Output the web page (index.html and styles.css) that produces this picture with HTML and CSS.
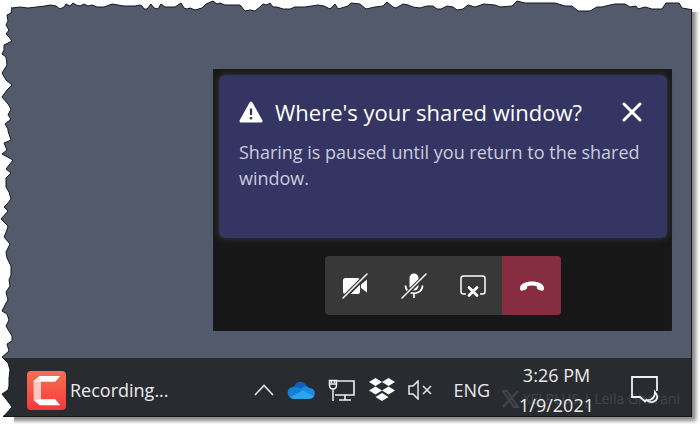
FILE: index.html
```html
<!DOCTYPE html>
<html lang="en">
<head>
<meta charset="utf-8">
<title>Desktop sharing notification</title>
<link rel="stylesheet" href="styles.css">
</head>
<body>
<main class="desktop">
  <div class="workspace">
    <section class="call" aria-label="Call monitor">
      <div class="banner">
        <header class="banner-head">
          <svg class="warning" viewBox="0 0 24 24" aria-hidden="true">
            <path d="M12 3 L22 21 H2 Z" fill="#fff" stroke="#fff" stroke-width="3" stroke-linejoin="round"/>
            <path d="M12 8.500V15" stroke="#33345f" stroke-width="2.200"/>
            <circle cx="12" cy="18.300" r="1.300" fill="#33345f"/>
          </svg>
          <h1 class="title">Where's your shared window?</h1>
          <button class="close" aria-label="Close">
            <svg viewBox="0 0 20 20" width="20" height="20"><path d="M2 2 18 18M18 2 2 18" stroke="#fff" stroke-width="3" stroke-linecap="round"/></svg>
          </button>
        </header>
        <p class="message">Sharing is paused until you return to the shared window.</p>
      </div>
      <div class="controls">
        <button class="control" aria-label="Turn camera on">
          <svg viewBox="0 0 28 28" width="28" height="28">
            <rect x="2" y="6" width="17" height="16" rx="2.500" fill="#fff"/>
            <path d="M20 12.500 26 7.500V20.500L20 16Z" fill="#fff"/>
            <path d="M2 26.500 27 1.500" stroke="#383838" stroke-width="4.500"/>
            <path d="M2 26 26 2" stroke="#fff" stroke-width="1.500" stroke-linecap="round"/>
          </svg>
        </button>
        <button class="control" aria-label="Unmute">
          <svg viewBox="0 0 28 28" width="28" height="28">
            <rect x="9.500" y="1.500" width="9" height="17" rx="4.500" fill="#fff"/>
            <path d="M5.500 13.500C5.500 24 22.500 24 22.500 13.500M14 21.500V26" fill="none" stroke="#fff" stroke-width="1.700"/>
            <path d="M2 26.500 27 1.500" stroke="#383838" stroke-width="4"/>
            <path d="M2 26 26 2" stroke="#fff" stroke-width="1.500" stroke-linecap="round"/>
          </svg>
        </button>
        <button class="control" aria-label="Stop sharing">
          <svg viewBox="0 0 28 28" width="28" height="28">
            <path d="M7 22H4.500Q2 22 2 19.500V6.500Q2 4 4.500 4H23.500Q26 4 26 6.500V19.500Q26 22 23.500 22H21" fill="none" stroke="#fff" stroke-width="1.500"/>
            <path d="M10 15.500 18 23.500M18 15.500 10 23.500" stroke="#fff" stroke-width="2.800" stroke-linecap="round"/>
          </svg>
        </button>
        <button class="control hangup" aria-label="Hang up">
          <svg viewBox="0 0 28 28" width="28" height="28">
            <path d="M14 9.500C20 9.500 26.500 12 26 16.500C25.800 19 24.500 19 22 18.300C19 17.500 19 16.500 18.700 14.300Q14 12.700 9.300 14.300C9 16.500 9 17.500 6 18.300C3.500 19 2.200 19 2 16.500C1.500 12 8 9.500 14 9.500Z" fill="#fff"/>
          </svg>
        </button>
      </div>
    </section>
  </div>
  <footer class="taskbar">
    <button class="app">
      <svg class="app-logo" viewBox="0 0 40 40" aria-hidden="true">
        <defs><linearGradient id="coral" x1="0" y1="0" x2="0" y2="1"><stop offset="0" stop-color="#f37150"/><stop offset="1" stop-color="#f9383e"/></linearGradient></defs>
        <rect width="40" height="40" rx="4" fill="url(#coral)"/>
        <path d="M13 5H34L29 11H14V29H29L34 35H13L7 30V10Z" fill="#fff"/>
        <path d="M7 10 14 11V29L7 30Z" fill="#fdc6c1"/>
        <path d="M13 5 7 10V12L14 11Z" fill="#fde4df"/>
      </svg>
      <span>Recording...</span>
    </button>
    <div class="tray">
      <svg viewBox="0 0 20 12" width="20" height="12" role="img" aria-label="Show hidden icons"><path d="M1 11 10 1.500 19 11" stroke="#e9e9ea" stroke-width="1.600"/></svg>
      <svg viewBox="0 0 28 18" width="28" height="18" role="img" aria-label="OneDrive">
        <path d="M7 6C9-1 18-1 20 6L16 11 4 10Z" fill="#0c62b8"/>
        <path d="M6 6C12 5 13 8 17 10L5 17C-1 16-1 7 6 6Z" fill="#127fd8"/>
        <path d="M13 9C16 5 20 4 22 7C30 7 29 17 23 18L14 13Z" fill="#168be3"/>
        <path d="M3 16 16 9.500 27 15Q25 18 22 18H7Q4 18 3 16Z" fill="#2aa5ed"/>
      </svg>
      <svg viewBox="0 0 28 24" width="28" height="24" role="img" aria-label="Network">
        <path d="M9 3H26V17H7M17 17V22M11 22H23" stroke="#f0f0f0" stroke-width="1.600"/>
        <path d="M1.500 2.500H8.500V7Q8.500 11 5 11Q1.500 11 1.500 7ZM1.500 6H8.500M5 11V23M3.500 2V5M6.500 2V5" stroke="#f0f0f0" stroke-width="1.500"/>
      </svg>
      <svg viewBox="0 0 26 24" width="26" height="24" role="img" aria-label="Dropbox">
        <path fill="#fff" d="M6.500 0 13 4 6.500 8 0 4ZM19.500 0 26 4 19.500 8 13 4ZM6.500 8.500 13 12.500 6.500 16.500 0 12.500ZM19.500 8.500 26 12.500 19.500 16.500 13 12.500ZM13 15 19.500 19 13 23 6.500 19Z"/>
      </svg>
      <svg viewBox="0 0 24 20" width="24" height="20" role="img" aria-label="Muted">
        <path d="M1 6H5L10 1V19L5 14H1ZM15 6 23 14M23 6 15 14" stroke="#e9e9ea" stroke-width="1.500"/>
      </svg>
      <span class="language">ENG</span>
      <div class="clock"><time>3:26 PM</time><time>1/9/2021</time></div>
      <svg viewBox="0 0 28 28" width="28" height="28" role="img" aria-label="Notifications">
        <path d="M16 23 14 25.500 9 21H1V1H26V15M24 16Q28 21 25 24Q21 28 16 24.500Q24 24 24 16Z" stroke="#f0f0f0" stroke-width="1.800"/>
      </svg>
    </div>
    <span class="watermark"><svg viewBox="0 0 18 18" width="18" height="18" aria-hidden="true"><path d="M1 1H5L16 17H12ZM16 1 1 17" stroke="currentColor" stroke-width="2"/></svg>XELPLUS | Leila Gharani</span>
  </footer>
</main>
<svg class="tear tear-top" viewBox="0 0 700 12" preserveAspectRatio="none" aria-hidden="true">
  <path d="M-3-3V8H12L20 7 28 8 45 6 50 5 56 6 60 9 64 7 66 4 70 6 73 3 76 5 80 6 84 4 88 6 92 5 97 7 104 7 112 4 118 5 124 6 135 6 140 5 142 6 144 9 147 9 151 4 154 8 158 9 161 4 165 7 175 7 178 5 181 3 184 8 187 9 190 8 195 10 202 8 206 4 213 1 217 4 220 3 225 5 240 5 245 11 250 10 255 11 260 7 263 4 267 5 270 3 273 7 277 7 283 9 290 9 295 7 305 7 318 5 324 6 330 9 335 4 338 9 348 6 351 3 360 4 366 9 375 7 383 6 387 2 393 7 396 8 403 4 408 5 413 7 420 8 427 6 433 6 437 9 441 9 447 6 453 7 457 10 463 9 468 5 475 7 484 4 495 5 500 7 512 6 517 1 525 3 540 3 555 3 565 6 572 6 578 11 590 11 597 7 602 7 610 5 615 4 625 4 630 7 636 6 638 9 645 7 652 9 662 9 666 3 679 3 682 8 691 9.500V-3Z"/>
  <path class="cover" d="M690-3H702V9H690Z"/>
  <path class="cover" d="M692-3H702V14H692Z"/>
</svg>
<svg class="tear tear-left" viewBox="0 0 14 424" preserveAspectRatio="none" aria-hidden="true">
  <path d="M-3 8H12L11 13 7 15 8 21 6 25 9 30 6 34 9 37 12 41 4 45 4 50 2 54 6 57 7 65 2 73 6 80 12 85 7 90 2 97 8 104 11 109 8 115 11 119 5 124 8 129 8 131 11 140 4 143 7 150 2 154 13 160 6 169 11 173 6 178 6 187 9 192 11 199 8 203 4 207 8 211 1 219 8 226 7 230 4 237 10 244 6 252 7 258 11 266 11 275 9 280 10 286 6 292 8 300 6 303 2 311 7 314 9 320 6 326 12 336 12 341 7 344 9 351 2 357 8 363 10 370 9 378 9 386 8 390 2 394 9 403 12 407 4 416H-3Z"/>
  <path class="cover" d="M-3-3H11V9H-3ZM-3 411H3V424H-3ZM-3 417H14V425H-3Z"/>
</svg>
</body>
</html>
```
FILE: styles.css
```css
* { box-sizing: border-box; }

body {
  margin: 0;
  min-height: 100vh;
  padding: 0 8px 7px 0;
  display: flex;
  position: relative;
  overflow: hidden;
  background: #fff;
  font-family: "Open Sans", "Noto Sans", sans-serif;
}

button {
  border: 0;
  padding: 0;
  background: none;
  color: inherit;
  font: inherit;
}

svg { display: block; flex: none; fill: none; }

.desktop {
  flex: 1;
  display: flex;
  flex-direction: column;
  background: #525a6c;
  border-right: 1px solid #15171a;
  border-bottom: 1px solid #15171a;
  box-shadow: 4px 4px 4px 0 #888;
}

.workspace {
  flex: 1;
  display: flex;
  justify-content: flex-end;
  align-items: flex-start;
  padding: 69px 19px 27px;
}

.call {
  width: 459px;
  max-width: 100%;
  padding: 6px 5px 16px 6px;
  background: #171717;
  box-shadow: inset 0 0 2px #1d2e30;
}

.banner {
  min-height: 163px;
  padding: 20px;
  border-radius: 6px;
  background: #343562;
  box-shadow: 0 0 6px 1px #343536;
}

.banner-head {
  display: flex;
  align-items: center;
  height: 34px;
}

.warning { width: 24px; height: 24px; }

.title {
  flex: 1;
  margin: 0 0 0 12px;
  color: #fff;
  font-size: 22px;
  font-weight: 500;
  line-height: 34px;
}

.close { margin-right: 5px; }

.message {
  margin: 10px 0 0;
  color: #cbcbdf;
  font-size: 18px;
  line-height: 26px;
}

.controls {
  display: flex;
  width: fit-content;
  margin: 18px auto 0 106px;
  border-radius: 4px;
  overflow: hidden;
  background: #383838;
}

.control {
  display: grid;
  place-items: center;
  width: 59px;
  height: 59px;
}

.hangup { background: #872d42; }

.taskbar {
  position: relative;
  display: flex;
  justify-content: space-between;
  align-items: center;
  height: 58px;
  padding: 0 32px 0 27px;
  overflow: hidden;
  background: #282b30;
  color: #ececed;
  font-size: 18px;
}

.app {
  display: flex;
  align-items: center;
  gap: 4px;
  padding-top: 6px;
}

.app-logo { width: 39px; height: 39px; }

.tray {
  display: flex;
  align-items: center;
  gap: 13px;
  padding-top: 6px;
}

.language { margin-left: 8px; }

.clock {
  display: flex;
  flex-direction: column;
  margin: 0 24px 0 16px;
  text-align: center;
  line-height: 30px;
}

.watermark {
  position: absolute;
  right: 11px;
  bottom: 8px;
  display: flex;
  align-items: center;
  gap: 2px;
  color: #fff;
  font-size: 14px;
  opacity: 0.12;
}

.tear { position: absolute; top: 0; left: 0; }
.tear path { fill: #fff; stroke: #15191f; stroke-width: 1; }
.tear .cover { stroke: none; }
.tear-top { width: 100%; height: 12px; }
.tear-left { width: 14px; height: 100%; }
```
